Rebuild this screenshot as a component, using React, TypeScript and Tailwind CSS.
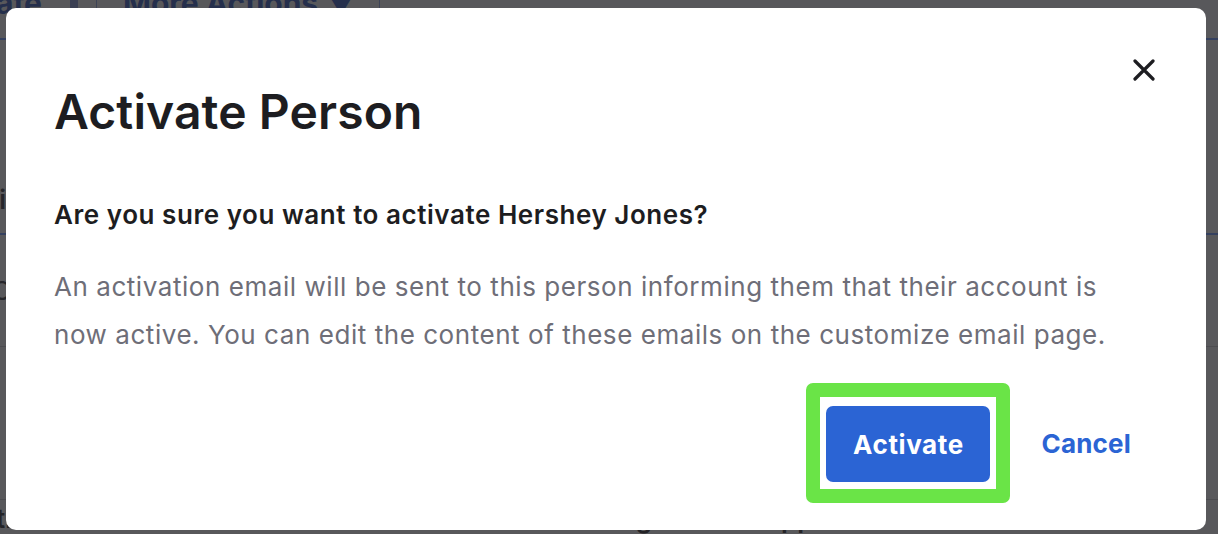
function BackgroundPage() {
  return (
    <div className="flex h-full flex-col text-[#252f4c]">
      <div className="-mt-[15px] flex h-[57px] items-start border-b-2 border-[#34405f]">
        <span className="-ml-[4px] text-[30px] font-bold leading-[36px]">ate</span>
        <span className="ml-[28px] mt-[2px] h-[24px] w-[8px] bg-[#3a3f52]" />
        <span className="ml-[18px] h-[34px] w-px bg-[#3d4356]" />
        <span className="ml-[26px] text-[30px] font-bold leading-[36px]">More Actions ▼</span>
        <span className="ml-[22px] h-[34px] w-px bg-[#3d4356]" />
      </div>
      <div className="mt-[145px] flex h-[50px] items-end border-b-2 border-[#34405f] pb-[14px] text-[26px] font-semibold text-[#26262b]">
        <span className="-ml-[10px]">ti</span>
      </div>
      <div className="flex h-[118px] items-center border-b border-[#4c4c50] text-[26px] text-[#26262b]">
        <span className="-ml-[8px]">C</span>
      </div>
      <div className="h-[160px] border-b border-[#4c4c50]" />
      <div className="mt-[4px] flex text-[26px] font-semibold leading-[30px] text-[#232327]">
        <span className="-ml-[4px]">tion</span>
        <span className="ml-[538px]">Assignment &amp; App Username</span>
      </div>
    </div>
  );
}

export default function App() {
  return (
    <div
      className="relative h-[534px] w-[1218px] overflow-hidden bg-[#58585b]"
      style={{ fontFamily: "Inter, 'Liberation Sans', sans-serif" }}
    >
      <BackgroundPage />

      <div className="absolute left-[6px] top-[8px] flex h-[522px] w-[1200px] flex-col rounded-[10px] bg-white px-[48px] pt-[50px]">
        <div className="flex items-start justify-between">
          <h1 className="mt-[26px] text-[48px] font-semibold leading-[56px] tracking-[0.1px] text-[#1d1d21]">
            Activate Person
          </h1>
          <button type="button" aria-label="Close" className="mr-[3px] mt-[1px] text-[#1d1d21]">
            <svg width="22" height="22" viewBox="0 0 22 22" fill="none">
              <path
                d="M2 2L20 20M20 2L2 20"
                stroke="currentColor"
                strokeWidth="3.2"
                strokeLinecap="round"
              />
            </svg>
          </button>
        </div>

        <h2 className="mt-[59px] text-[26px] font-semibold leading-[32px] tracking-[0.55px] text-[#1d1d21]">
          Are you sure you want to activate Hershey Jones?
        </h2>

        <p className="mt-[32px] whitespace-nowrap text-[26px] leading-[48px] tracking-[0.55px] text-[#6e6e78]">
          An activation email will be sent to this person informing them that their account is
          <br />
          now active. You can edit the content of these emails on the customize email page.
        </p>

        <div className="mt-[24px] flex items-center justify-end gap-[31px] pr-[27px]">
          <div className="rounded-[7px] border-[14px] border-[#6ae447] px-[6px] pb-[7px] pt-[9px]">
            <button
              type="button"
              className="h-[76px] w-[164px] rounded-[7px] bg-[#2b64d4] text-[26px] font-bold tracking-[0.6px] text-white"
            >
              Activate
            </button>
          </div>
          <button type="button" className="text-[26px] font-bold tracking-[0.2px] text-[#2b64d4]">
            Cancel
          </button>
        </div>
      </div>
    </div>
  );
}
